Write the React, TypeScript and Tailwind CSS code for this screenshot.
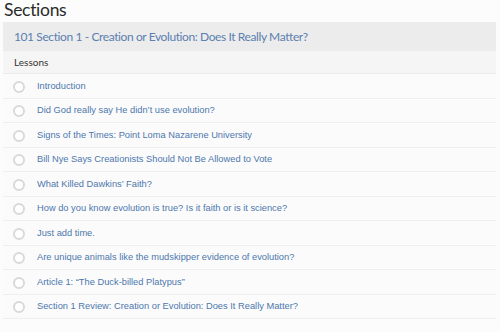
const lessons = [
  'Introduction',
  'Did God really say He didn’t use evolution?',
  'Signs of the Times: Point Loma Nazarene University',
  'Bill Nye Says Creationists Should Not Be Allowed to Vote',
  'What Killed Dawkins’ Faith?',
  'How do you know evolution is true? Is it faith or is it science?',
  'Just add time.',
  'Are unique animals like the mudskipper evidence of evolution?',
  'Article 1: “The Duck-billed Platypus”',
  'Section 1 Review: Creation or Evolution: Does It Really Matter?',
];

export default function App() {
  return (
    <div className="h-[332px] w-[500px] overflow-hidden bg-[#fcfcfc] pl-[3px] pr-[4px]">
      <h2 className="h-[22px] pl-[1px] font-['Lato',sans-serif] text-[17.5px] leading-[20px] tracking-[-0.3px] text-[#2a2a2a]">
        Sections
      </h2>
      <div className="flex h-[29px] items-center bg-[#ececec] px-[11px] font-['Lato',sans-serif] text-[12px] tracking-[-0.4px] text-[#5b80b0]">
        101 Section 1 - Creation or Evolution: Does It Really Matter?
      </div>
      <div className="flex h-[23px] items-center border-b border-[#ebebeb] bg-[#f5f5f5] px-[11px] font-['Lato',sans-serif] text-[10px] text-[#333]">
        Lessons
      </div>
      <ul>
        {lessons.map((lesson) => (
          <li
            key={lesson}
            className="flex h-[24.5px] items-center border-b border-[#efefef] bg-[#fbfbfb] pl-[10px] pt-[2px]"
          >
            <span className="h-[12px] w-[12px] shrink-0 rounded-full border-2 border-[#d9d9d9] bg-white" />
            <span className="ml-[12px] font-['Liberation_Sans',Arial,sans-serif] text-[9.3px] text-[#4d77ad]">
              {lesson}
            </span>
          </li>
        ))}
      </ul>
    </div>
  );
}
